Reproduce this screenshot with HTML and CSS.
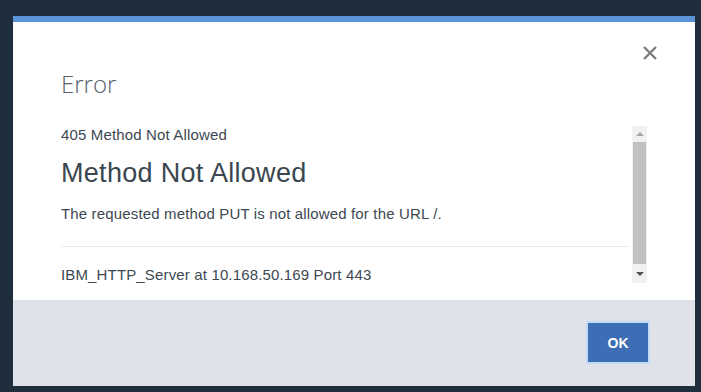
FILE: index.html
```html
<!DOCTYPE html>
<html lang="en">
<head>
    <meta charset="UTF-8">
    <title>Error</title>
    <link rel="stylesheet" href="styles.css">
</head>
<body>
    <div class="dialog">
        <div class="dialog-head">
            <h1 class="title">Error</h1>
            <button class="close" aria-label="Close">
                <svg width="16" height="16" viewBox="0 0 16 16">
                    <path d="M2 2 L14 14 M14 2 L2 14" stroke="#7d7d7d" stroke-width="2.4" fill="none"/>
                </svg>
            </button>
        </div>
        <div class="dialog-body">
            <div class="content">
                <p class="status">405 Method Not Allowed</p>
                <h2>Method Not Allowed</h2>
                <p class="message">The requested method PUT is not allowed for the URL /.</p>
                <hr>
                <p class="server">IBM_HTTP_Server at 10.168.50.169 Port 443</p>
            </div>
            <div class="scrollbar">
                <div class="arrow up"></div>
                <div class="thumb"></div>
                <div class="arrow down"></div>
            </div>
        </div>
        <div class="dialog-foot">
            <button class="ok">OK</button>
        </div>
    </div>
</body>
</html>
```

FILE: styles.css
```css
* {
    margin: 0;
    padding: 0;
    box-sizing: border-box;
}

body {
    background: #1e2e3c;
    padding: 16px 6px 0 13px;
    font-family: 'Liberation Sans', Arial, sans-serif;
    color: #3d4852;
}

.dialog {
    width: 682px;
    height: 370px;
    background: white;
    border-top: 6px solid #5b93d9;
    display: flex;
    flex-direction: column;
}

.dialog-head {
    display: flex;
    justify-content: space-between;
    align-items: flex-start;
    padding: 23px 37px 26px 48px;
}

.title {
    margin-top: 24px;
    font-family: 'Open Sans', sans-serif;
    font-weight: 300;
    font-size: 24px;
    line-height: 30px;
    color: #56626c;
}

.close {
    width: 16px;
    height: 16px;
    border: none;
    background: none;
    display: flex;
}

.dialog-body {
    display: flex;
    padding: 0 48px 15px 48px;
}

.content {
    flex: 1;
}

.content p {
    font-size: 15px;
    line-height: 20px;
    letter-spacing: 0.15px;
}

.content h2 {
    margin-top: 12px;
    font-weight: normal;
    font-size: 27px;
    line-height: 32px;
    letter-spacing: 0.3px;
    color: #3a4650;
}

.message {
    margin-top: 15px;
}

hr {
    border: none;
    border-top: 1px solid #ebebeb;
    margin: 22px 2px 18px 0;
}

.scrollbar {
    width: 15px;
    height: 157px;
    margin-top: 1px;
    display: flex;
    flex-direction: column;
    background: #f1f1f1;
}

.arrow {
    height: 16px;
    display: flex;
    align-items: center;
    justify-content: center;
}

.arrow::after {
    content: '';
    border-left: 4px solid transparent;
    border-right: 4px solid transparent;
}

.up::after {
    border-bottom: 4px solid #a3a3a3;
}

.down {
    height: 19px;
}

.down::after {
    border-top: 4px solid #505050;
}

.thumb {
    flex: 1;
    background: #c1c1c1;
    margin: 0 1px;
}

.dialog-foot {
    flex: 1;
    background: #dfe3e9;
    border-top: 1px solid #d9dee4;
    display: flex;
    justify-content: flex-end;
    align-items: flex-start;
    padding: 22px 47px 0 0;
}

.ok {
    width: 60px;
    height: 39px;
    background: #3d6db4;
    color: white;
    border: none;
    outline: 2px solid #c3daf5;
    font-family: 'Liberation Sans', Arial, sans-serif;
    font-weight: bold;
    font-size: 14px;
}
```
